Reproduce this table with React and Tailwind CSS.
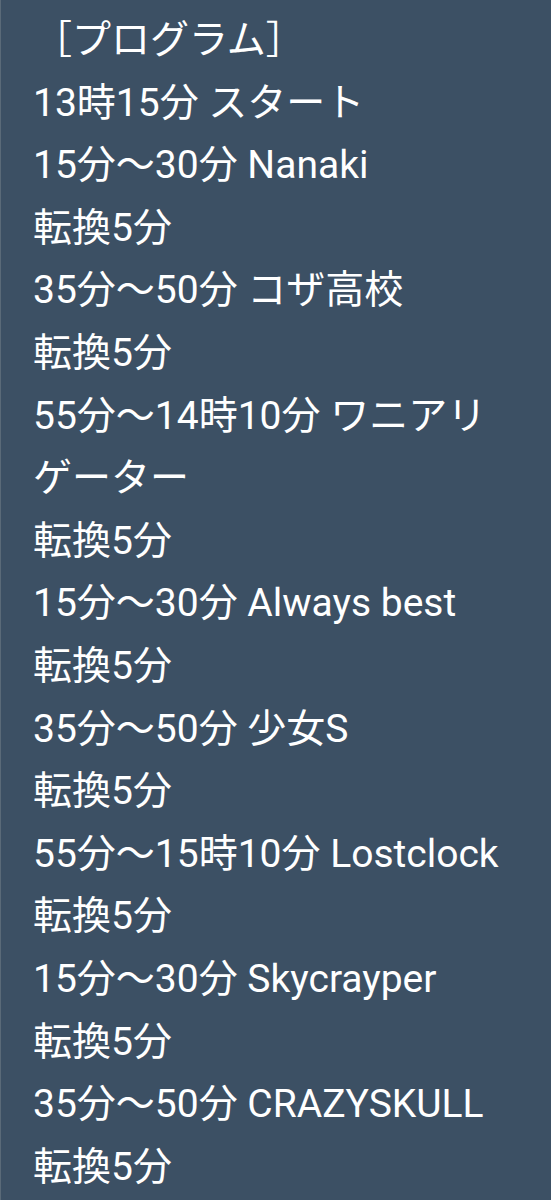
export default function App() {
  const lines = [
    "［プログラム］",
    "13時15分 スタート",
    "15分〜30分 Nanaki",
    "転換5分",
    "35分〜50分 コザ高校",
    "転換5分",
    "55分〜14時10分 ワニアリ",
    "ゲーター",
    "転換5分",
    "15分〜30分 Always best",
    "転換5分",
    "35分〜50分 少女S",
    "転換5分",
    "55分〜15時10分 Lostclock",
    "転換5分",
    "15分〜30分 Skycrayper",
    "転換5分",
    "35分〜50分 CRAZYSKULL",
    "転換5分",
  ];
  return (
    <div className="w-[551px] h-[1200px] bg-[#3c5064] border-l border-[#5a6a78] overflow-hidden pt-[9px] pl-[32px] text-white text-[39px] leading-[62.6px] font-['Roboto','Noto_Sans_CJK_JP',sans-serif]">
      {lines.map((l, i) => (
        <div key={i} className="whitespace-nowrap">{l}</div>
      ))}
    </div>
  );
}
